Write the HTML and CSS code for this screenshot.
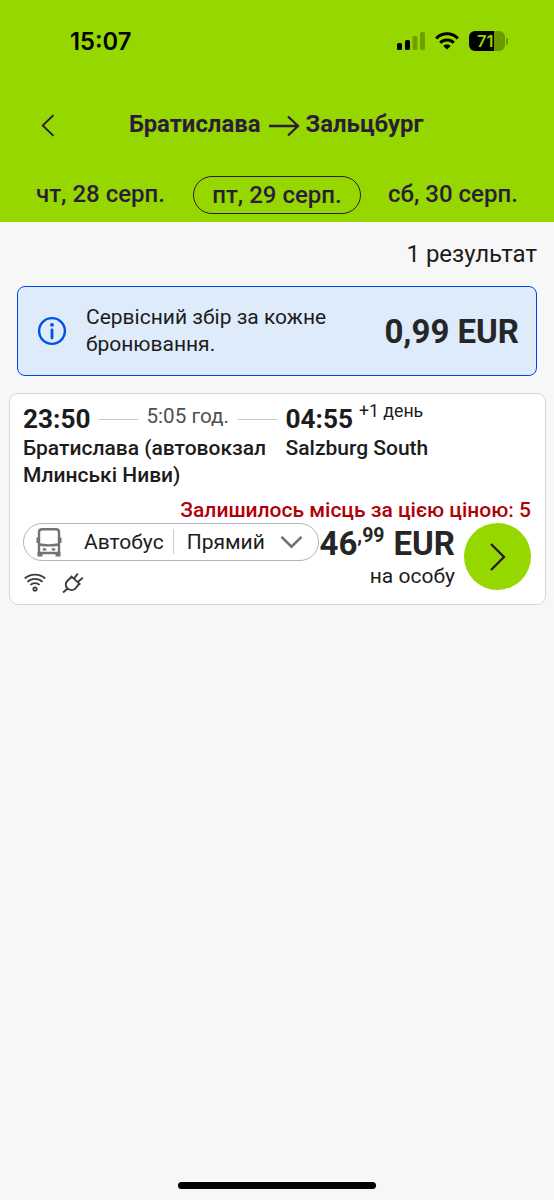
FILE: index.html
```html
<!DOCTYPE html>
<html lang="uk">
<head>
<meta charset="utf-8">
<title>Братислава – Зальцбург</title>
<link rel="stylesheet" href="styles.css">
</head>
<body>
<div class="screen">
  <header class="header">
    <div class="status">
      <span class="clock">15:07</span>
      <div class="status-icons">
        <svg width="28" height="18" viewBox="0 0 28 18"><rect x="0" y="11" width="5" height="7" rx="1.6"/><rect x="8" y="8" width="5" height="10" rx="1.6"/><g opacity=".25"><rect x="15.500" y="4" width="5" height="14" rx="1.600"/><rect x="23" y="0" width="5" height="18" rx="1.6"/></g></svg>
        <svg width="24" height="18" viewBox="0 0 24 18"><g fill="none" stroke="#000" stroke-width="3"><path d="M1.200 6.500C7.200.3 16.800.3 22.800 6.500"/><path d="M5.200 10.700C9 7 15 7 18.800 10.700"/></g><path d="M12 17.600 8.300 13.900C10.300 12 13.700 12 15.700 13.900Z"/></svg>
        <div class="battery"><div class="battery-body"><span>71</span></div><i></i></div>
      </div>
    </div>
    <div class="route">
      <svg class="back" width="14" height="23" viewBox="0 0 14 23"><path d="M12.500 1.200 1.700 11.500 12.500 21.800" fill="none" stroke="#23192d" stroke-width="1.800"/></svg>
      <h1><span class="from">Братислава</span><svg width="31" height="22" viewBox="0 0 31 22"><path d="M0 11H28.500M19 1.500 29 11 19 20.500" fill="none" stroke="#2b1d38" stroke-width="2.300"/></svg><span class="to">Зальцбург</span></h1>
    </div>
    <nav class="dates">
      <span class="date prev">чт, 28 серп.</span>
      <span class="date current">пт, 29 серп.</span>
      <span class="date next">сб, 30 серп.</span>
    </nav>
  </header>
  <main>
    <p class="count">1 результат</p>
    <section class="fee">
      <svg width="30" height="30" viewBox="0 0 30 30"><circle cx="15" cy="15" r="12.900" fill="none" stroke="#0052e6" stroke-width="2.400"/><circle cx="15" cy="8.800" r="1.900" fill="#0052e6"/><path d="M15 14V22" stroke="#0052e6" stroke-width="2.800" stroke-linecap="round"/></svg>
      <p>Сервісний збір за кожне<br>бронювання.</p>
      <strong>0,99 EUR</strong>
    </section>
    <article class="trip">
      <div class="legs">
        <div class="depart">
          <div class="times"><b class="time">23:50</b><i class="rule"></i><span class="duration">5:05 год.</span><i class="rule"></i></div>
          <p class="station">Братислава (автовокзал<br>Млинські Ниви)</p>
        </div>
        <div class="arrive">
          <div class="times"><b class="time">04:55</b><span class="plus">+1 день</span></div>
          <p class="station">Salzburg South</p>
        </div>
      </div>
      <p class="seats">Залишилось місць за цією ціною: 5</p>
      <div class="offer">
        <div class="left">
          <div class="mode">
            <svg width="26" height="30" viewBox="0 0 26 30"><g fill="none" stroke="#737373" stroke-width="2.400"><path d="M3 26V5Q3 2.200 6.200 2.200H19.800Q23 2.200 23 5V26Z"/><path d="M3 17.500Q13 19.200 23 17.500"/></g><path d="M.5 10.500H2.500V16H.5ZM23.500 10.500H25.500V16H23.500ZM1.500 25H6.500V29.500H1.500ZM19.500 25H24.500V29.500H19.500Z" fill="#737373"/><path d="M6.800 22.300H10.300M15.700 22.300H19.200" stroke="#737373" stroke-width="2.200"/></svg>
            <span class="bus">Автобус</span><i class="sep"></i><span class="direct">Прямий</span>
            <svg width="23" height="14" viewBox="0 0 23 14"><path d="M1.500 1.800 11.500 11.700 21.500 1.800" fill="none" stroke="#717171" stroke-width="2.500"/></svg>
          </div>
          <div class="amenities">
            <svg width="22" height="19" viewBox="0 0 22 19"><g fill="none" stroke="#3c3c3c" stroke-width="1.700"><path d="M.8 5.500C6.500.3 15.500.3 21.200 5.500"/><path d="M3.500 8.900C7.700 4.900 14.300 4.900 18.500 8.900"/><path d="M6.400 11.900C9 9.400 13 9.400 15.600 11.900"/><circle cx="11" cy="16" r="1.700"/></g></svg>
            <svg width="22" height="22" viewBox="0 0 22 22"><path d="M1 20.500 6 16.300M8.800 3.900 18.300 12.600M9.700 4.800 5.700 8.500C3.300 11 3.200 13.900 5.300 16.200 7.600 18.500 11 18.500 13.500 16.400L17.300 11.700M12 6.600 15.800 1.500M15.800 10 20.800 5.700" fill="none" stroke="#3c3c3c" stroke-width="1.900"/></svg>
          </div>
        </div>
        <div class="price">
          <strong><span class="whole">46</span><sup>,99</sup><span class="cur">EUR</span></strong>
          <span class="per">на особу</span>
        </div>
        <div class="go"><svg width="18" height="30" viewBox="0 0 18 30"><path d="M2 2 15 15 2 28" fill="none" stroke="#23192d" stroke-width="2.300"/></svg></div>
      </div>
    </article>
  </main>
  <div class="home"></div>
</div>
</body>
</html>
```
FILE: styles.css
```css
* { box-sizing: border-box; }
body { margin: 0; font-family: Roboto, sans-serif; color: #1c1c1c; background: #f7f7f7; }
p, h1 { margin: 0; }
svg { display: block; flex: none; }
span, b, strong, p { white-space: nowrap; }
.screen { width: 554px; height: 1200px; display: flex; flex-direction: column; background: #f7f7f7; }
.header { height: 222px; background: #97d700; color: #2b1d38; }
.status { height: 82px; display: flex; align-items: center; justify-content: space-between; padding: 0 46px 0 70px; color: #000; }
.clock { font: 600 23.700px Inter, sans-serif; }
.status-icons { display: flex; align-items: center; gap: 10px; }
.battery { display: flex; align-items: center; gap: 1px; }
.battery-body { width: 36px; height: 20px; border-radius: 6px; background: linear-gradient(90deg, #000 25px, #6b9a00 25px); color: #97d700; font: 600 16.500px/20px Inter, sans-serif; padding-left: 8px; }
.battery i { width: 2px; height: 7px; border-radius: 0 2px 2px 0; background: #6b9a00; }
.route { height: 86px; display: flex; align-items: center; padding: 0 0 0 41px; }
.route h1 { display: flex; align-items: center; margin: -2px 0 0 74px; font-size: 23.900px; line-height: 28px; font-weight: 700; }
.route h1 svg { margin: 4px 5px 0 9px; }
.dates { height: 54px; display: flex; align-items: center; padding: 0 0 0 36px; font-size: 24px; font-weight: 500; line-height: 36px; }
.prev, .next { padding-bottom: 3px; }
.current { width: 168px; height: 38px; margin: 0 27px 0 28px; border: 1.500px solid #2b1d38; border-radius: 19px; text-align: center; }
main { flex: 1; }
.count { height: 64px; padding-right: 17px; font-size: 24px; line-height: 64px; text-align: right; }
.fee { height: 90px; margin: 0 17px; padding: 0 17px 0 19px; display: flex; align-items: center; border: 1.500px solid #0046e6; border-radius: 8px; background: #deebfb; }
.fee p { margin-left: 19px; font-size: 21px; line-height: 27px; flex: 1; padding-bottom: 1px; }
.fee strong { font-size: 33px; color: #262626; }
.trip { height: 212px; margin: 17px 8px 0 9px; border: 1.500px solid #d6d6d6; border-radius: 9px; background: #fff; padding: 9px 14px 0 13px; }
.legs { display: flex; height: 95px; }
.depart { width: 262.500px; }
.times { display: flex; height: 32px; align-items: center; }
.time { font-size: 26.200px; }
.rule { width: 39px; height: 1px; margin: 0 9px; background: #c8c8c8; }
.duration { font-size: 20.700px; color: #505050; margin: -7px 0 0 -1px; }
.depart .rule:last-child { margin-right: 0; }
.plus { font-size: 17.700px; margin: -16px 0 0 6px; }
.station { font-size: 21px; font-weight: 500; line-height: 27px; }
.seats { height: 25px; font-size: 21px; line-height: 24px; font-weight: 500; text-align: right; color: #b00008; }
.offer { display: flex; }
.left { width: 296px; flex: none; }
.mode { width: 296px; height: 38px; border: 1.500px solid #b5b5b5; border-radius: 19px; display: flex; align-items: center; padding: 0 0 1px 12px; font-size: 21px; }
.bus { margin-left: 22px; }
.sep { width: 1px; height: 25px; background: #ccc; margin: 0 13px 0 9px; }
.direct { margin-right: 15px; }
.amenities { display: flex; align-items: center; gap: 16px; height: 43px; padding-left: 1px; }
.price { width: 136px; height: 70px; flex: none; display: flex; flex-direction: column; align-items: flex-end; }
.price strong { display: flex; font-size: 33px; line-height: 42px; color: #262626; }
.price sup { font-size: 19.500px; line-height: 26px; vertical-align: baseline; }
.cur { margin-left: 9px; }
.per { font-size: 21px; line-height: 22px; }
.go { width: 67px; height: 67px; flex: none; margin-left: 9px; border-radius: 50%; background: #97d700; display: flex; align-items: center; justify-content: center; }
.home { width: 198px; height: 7px; margin: 0 auto 11px; border-radius: 4px; background: #000; }
```
